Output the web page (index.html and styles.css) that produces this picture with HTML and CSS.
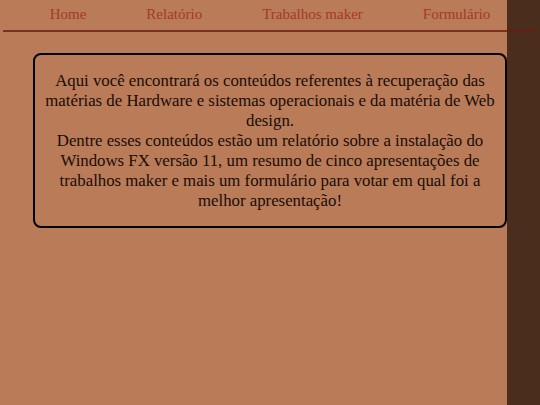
FILE: index.html
```html
<!DOCTYPE html>
<html lang="pt-BR">
<head>
<meta charset="utf-8">
<title>Recuperação</title>
<link rel="stylesheet" href="styles.css">
</head>
<body>
<header class="nav">
  <a class="nav-link" href="#">Home</a>
  <a class="nav-link" href="#">Relatório</a>
  <a class="nav-link" href="#">Trabalhos maker</a>
  <a class="nav-link" href="#">Formulário</a>
</header>
<main class="content">
  <section class="intro">
    Aqui você encontrará os conteúdos referentes à recuperação das matérias de Hardware e sistemas operacionais e da matéria de Web design.<br>
    Dentre esses conteúdos estão um relatório sobre a instalação do Windows FX versão 11, um resumo de cinco apresentações de trabalhos maker e mais um formulário para votar em qual foi a melhor apresentação!
  </section>
</main>
</body>
</html>
```

FILE: styles.css
```css
html, body {
  margin: 0;
  padding: 0;
}

body {
  min-height: 100vh;
  background: linear-gradient(to right, #b97b58 0, #b97b58 507px, #4a2d1c 507px, #4a2d1c 100%);
  font-family: "Liberation Serif", "Times New Roman", serif;
  color: #1a0d08;
}

.nav {
  display: flex;
  justify-content: center;
  gap: 60px;
  margin: 0 3px;
  padding: 7px 0 8px;
  border-bottom: 2px solid rgba(105, 28, 18, 0.78);
}

.nav-link {
  font-size: 15px;
  line-height: 15px;
  color: #a5392c;
  text-decoration: none;
}

.content {
  padding: 21px 0 0 33px;
}

.intro {
  box-sizing: border-box;
  width: 474px;
  padding: 16px 2px 15px;
  border: 2px solid #000;
  border-radius: 8px;
  font-size: 16.8px;
  line-height: 20px;
  text-align: center;
}
```
